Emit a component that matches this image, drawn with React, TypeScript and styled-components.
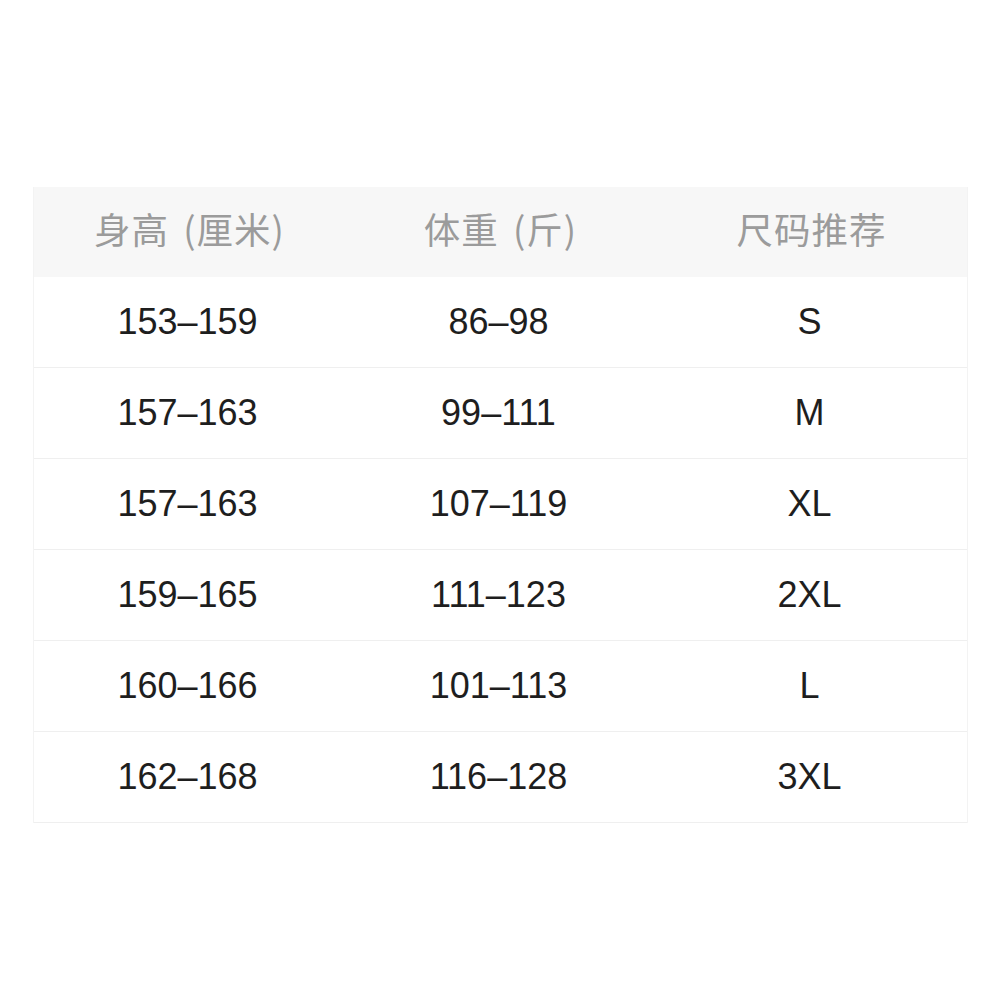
import React from "react";
import styled, { createGlobalStyle } from "styled-components";

const Global = createGlobalStyle`
  html, body { margin: 0; padding: 0; background: #ffffff; }
  body { font-family: "Liberation Sans", "Noto Sans CJK SC", sans-serif; }
`;

const Page = styled.div`
  width: 1000px;
  height: 1000px;
  box-sizing: border-box;
  padding: 187px 32px 0 33px;
  background: #ffffff;
`;

const Table = styled.div`
  display: grid;
  grid-template-columns: repeat(3, 1fr);
  border-left: 1px solid #f3f3f3;
  border-right: 1px solid #f3f3f3;
`;

const HeadCell = styled.div`
  height: 90px;
  display: flex;
  align-items: center;
  justify-content: center;
  background: #f7f7f7;
  color: #9b9b9b;
  font-family: "Noto Sans CJK SC", "Liberation Sans", sans-serif;
  font-size: 36.5px;
  letter-spacing: 1px;
  word-spacing: 5px;
  line-height: 1;
  padding-bottom: 6px;
  box-sizing: border-box;
`;

const Cell = styled.div`
  height: 91px;
  box-sizing: border-box;
  display: flex;
  align-items: center;
  justify-content: center;
  border-bottom: 1px solid #efefef;
  color: #1e1e1e;
  font-family: "Liberation Sans", "Noto Sans CJK SC", sans-serif;
  font-size: 36px;
  padding: 0 4px 1px 0;
`;

const headers = ["身高 (厘米)", "体重 (斤)", "尺码推荐"];
const rows: [string, string, string][] = [
  ["153–159", "86–98", "S"],
  ["157–163", "99–111", "M"],
  ["157–163", "107–119", "XL"],
  ["159–165", "111–123", "2XL"],
  ["160–166", "101–113", "L"],
  ["162–168", "116–128", "3XL"],
];

export default function App() {
  return (
    <>
      <Global />
      <Page>
        <Table>
          {headers.map((h) => (
            <HeadCell key={h}>{h}</HeadCell>
          ))}
          {rows.map((r, i) =>
            r.map((c, j) => <Cell key={`${i}-${j}`}>{c}</Cell>)
          )}
        </Table>
      </Page>
    </>
  );
}
